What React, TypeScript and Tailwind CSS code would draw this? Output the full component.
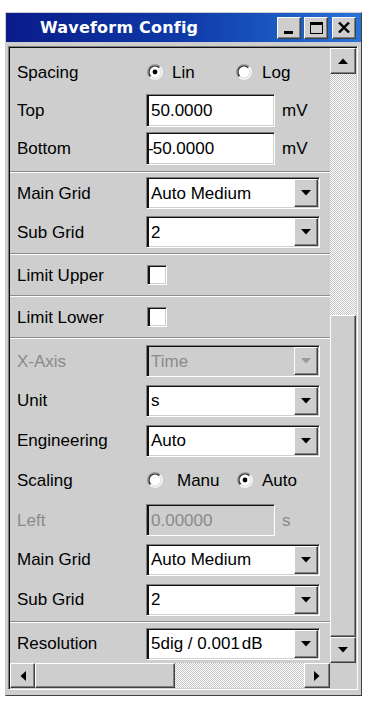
import React from "react";

const FACE = "bg-[#cecece]";
const raised =
  "border border-t-white border-l-white border-r-[#404040] border-b-[#404040] shadow-[inset_-1px_-1px_0_#808080] bg-[#cecece]";
const sunken =
  "border border-t-[#808080] border-l-[#808080] border-r-white border-b-white shadow-[inset_2px_1px_0_#111,inset_-1px_-1px_0_#d4d0c8]";
const dither =
  "bg-[image:repeating-conic-gradient(#ffffff_0%_25%,#c4c4c4_0%_50%)] bg-[length:2px_2px]";

function TriDown({ color = "#000" }: { color?: string }) {
  return (
    <svg width="10" height="6" viewBox="0 0 10 6">
      <polygon points="0,0 10,0 5,5.5" fill={color} />
    </svg>
  );
}
function TriUp() {
  return (
    <svg width="10" height="6" viewBox="0 0 10 6">
      <polygon points="0,6 10,6 5,0.5" fill="#000" />
    </svg>
  );
}
function TriLeft() {
  return (
    <svg width="6" height="10" viewBox="0 0 6 10">
      <polygon points="6,0 6,10 0.5,5" fill="#000" />
    </svg>
  );
}
function TriRight() {
  return (
    <svg width="6" height="10" viewBox="0 0 6 10">
      <polygon points="0,0 0,10 5.5,5" fill="#000" />
    </svg>
  );
}

function Radio({ checked }: { checked?: boolean }) {
  const c = 8;
  const a = (r: number) => {
    const d = r * Math.SQRT1_2;
    return { bl: `${c - d} ${c + d}`, tr: `${c + d} ${c - d}` };
  };
  const o = a(7.2);
  const i = a(6);
  return (
    <svg width="16" height="16" viewBox="0 0 16 16" className="shrink-0">
      <circle cx="8" cy="8" r="6.5" fill="#fff" />
      <path d={`M${o.bl} A7.2 7.2 0 0 1 ${o.tr}`} stroke="#8a8a8a" strokeWidth="1.3" fill="none" />
      <path d={`M${o.tr} A7.2 7.2 0 0 1 ${o.bl}`} stroke="#fff" strokeWidth="1.3" fill="none" />
      <path d={`M${i.bl} A6 6 0 0 1 ${i.tr}`} stroke="#303030" strokeWidth="1.2" fill="none" />
      <path d={`M${i.tr} A6 6 0 0 1 ${i.bl}`} stroke="#e0e0e0" strokeWidth="1.2" fill="none" />
      {checked && <circle cx="8" cy="8" r="2.4" fill="#000" />}
    </svg>
  );
}

function Label({ children, disabled }: { children: React.ReactNode; disabled?: boolean }) {
  return (
    <div className={`w-[129px] shrink-0 ${disabled ? "text-[#8a8a8a]" : "text-black"}`}>{children}</div>
  );
}

function Select({ value, disabled }: { value: React.ReactNode; disabled?: boolean }) {
  return (
    <div className={`w-[174px] h-full flex ${sunken} ${disabled ? FACE : "bg-white"}`}>
      <div className={`flex-1 flex items-center pl-[4px] whitespace-nowrap ${disabled ? "text-[#8a8a8a]" : "text-black"}`}>
        {value}
      </div>
      <div className={`w-[24px] my-[1px] mr-[1px] ${raised} flex items-center justify-center`}>
        <TriDown color={disabled ? "#9a9a9a" : "#000"} />
      </div>
    </div>
  );
}

function Input({
  value,
  unit,
  disabled,
  minus,
}: {
  value: string;
  unit: string;
  disabled?: boolean;
  minus?: boolean;
}) {
  return (
    <>
      <div
        className={`w-[129px] h-full flex items-center pl-[4px] ${sunken} ${
          disabled ? `${FACE} text-[#8a8a8a]` : "bg-white text-black"
        }`}
      >
        {minus && <span className="-ml-[3px] mr-[-1px]">-</span>}
        {value}
      </div>
      <div className={`ml-[7px] ${disabled ? "text-[#8a8a8a]" : "text-black"}`}>{unit}</div>
    </>
  );
}

function Sep() {
  return <div className="h-[2px] border-t border-t-[#8c8c8c] border-b border-b-white" />;
}

function Row({ children, h = "h-[32px]" }: { children: React.ReactNode; h?: string }) {
  return <div className={`flex items-center ${h}`}>{children}</div>;
}

export default function App() {
  return (
    <div
      className="w-[367px] h-[701px] bg-white pt-[12px] pl-[5px] text-[17px] leading-none"
      style={{ fontFamily: '"Liberation Sans", Arial, sans-serif' }}
    >
      <div className="w-[357px] h-[684px] bg-[#cecece] border border-t-[#cecece] border-l-[#cecece] border-r-[#404040] border-b-[#404040] flex flex-col">
        {/* Title bar */}
        <div className="h-[29px] shrink-0 flex items-center bg-linear-to-r from-[#0a1b8a] via-[#0f3aa8] to-[#2a72d8]">
          <div
            className="pl-[34px] text-white font-bold text-[16px] tracking-[0.2px]"
            style={{ fontFamily: '"DejaVu Sans", Verdana, sans-serif' }}
          >
            Waveform Config
          </div>
          <div className="ml-auto flex items-center pr-[5px]">
            <div className={`w-[24px] h-[22px] ${raised} flex items-end justify-center pb-[4px]`}>
              <div className="w-[9px] h-[3px] bg-black -ml-[2px]" />
            </div>
            <div className={`ml-[3px] w-[24px] h-[22px] ${raised} flex items-center justify-center`}>
              <div className="w-[13px] h-[12px] border border-black border-t-[3px]" />
            </div>
            <div className={`ml-[4px] w-[24px] h-[22px] ${raised} flex items-center justify-center`}>
              <svg width="12" height="11" viewBox="0 0 12 11">
                <path d="M1 0.5 L11 10.5 M11 0.5 L1 10.5" stroke="#000" strokeWidth="2.4" />
              </svg>
            </div>
          </div>
        </div>

        {/* frame gap */}
        <div className="h-[4px] shrink-0" />

        {/* Client area */}
        <div className="ml-[2px] w-[350px] h-[644px] border border-t-[#808080] border-l-[#808080] border-r-white border-b-white shadow-[inset_1px_1px_0_#111] p-[1px] flex flex-col">
          <div className="flex h-[615px]">
            {/* Panel */}
            <div className="w-[320px] flex flex-col">
              {/* Section 1 */}
              <div className="pt-[7px] pb-[6px] pl-[7px] flex flex-col gap-[5px]">
                <Row h="h-[34px]">
                  <Label>Spacing</Label>
                  <div className="w-[90px] flex items-center pl-[1px]">
                    <Radio checked />
                    <span className="ml-[9px]">Lin</span>
                  </div>
                  <div className="flex items-center">
                    <Radio />
                    <span className="ml-[10px]">Log</span>
                  </div>
                </Row>
                <Row h="h-[33px]">
                  <Label>Top</Label>
                  <Input value="50.0000" unit="mV" />
                </Row>
                <Row h="h-[33px]">
                  <Label>Bottom</Label>
                  <Input value="50.0000" unit="mV" minus />
                </Row>
              </div>
              <Sep />
              {/* Section 2 */}
              <div className="pt-[4px] pb-[5px] pl-[7px] flex flex-col gap-[7px]">
                <Row>
                  <Label>Main Grid</Label>
                  <Select value="Auto Medium" />
                </Row>
                <Row>
                  <Label>Sub Grid</Label>
                  <Select value="2" />
                </Row>
              </div>
              <Sep />
              <div className="h-[40px] pl-[7px] flex items-center">
                <Label>Limit Upper</Label>
                <div className={`ml-[1px] w-[20px] h-[20px] bg-white ${sunken}`} />
              </div>
              <Sep />
              <div className="h-[40px] pl-[7px] flex items-center">
                <Label>Limit Lower</Label>
                <div className={`ml-[1px] w-[20px] h-[20px] bg-white ${sunken}`} />
              </div>
              <Sep />
              {/* Section 5 */}
              <div className="pt-[6px] pb-[5px] pl-[7px] flex flex-col gap-[7.8px]">
                <Row>
                  <Label disabled>X-Axis</Label>
                  <Select value="Time" disabled />
                </Row>
                <Row>
                  <Label>Unit</Label>
                  <Select value="s" />
                </Row>
                <Row>
                  <Label>Engineering</Label>
                  <Select value="Auto" />
                </Row>
                <Row>
                  <Label>Scaling</Label>
                  <div className="w-[91px] flex items-center pl-[1px]">
                    <Radio />
                    <span className="ml-[14px]">Manu</span>
                  </div>
                  <div className="flex items-center">
                    <Radio checked />
                    <span className="ml-[9px]">Auto</span>
                  </div>
                </Row>
                <Row>
                  <Label disabled>Left</Label>
                  <Input value="0.00000" unit="s" disabled />
                </Row>
                <Row>
                  <Label>Main Grid</Label>
                  <Select value="Auto Medium" />
                </Row>
                <Row>
                  <Label>Sub Grid</Label>
                  <Select value="2" />
                </Row>
              </div>
              <Sep />
              <div className="pt-[5px] pl-[7px]">
                <Row>
                  <Label>Resolution</Label>
                  <Select
                    value={
                      <>
                        5dig / 0.001<span className="ml-[2px]">dB</span>
                      </>
                    }
                  />
                </Row>
              </div>
            </div>

            {/* Vertical scrollbar */}
            <div className="w-[26px] flex flex-col">
              <div className={`h-[26px] ${raised} flex items-center justify-center`}>
                <TriUp />
              </div>
              <div className={`h-[241px] ${dither}`} />
              <div className={`flex-1 ${raised}`} />
              <div className={`h-[26px] ${raised} flex items-center justify-center`}>
                <TriDown />
              </div>
            </div>
          </div>

          {/* Horizontal scrollbar */}
          <div className="flex h-[25px]">
            <div className={`w-[25px] ${raised} flex items-center justify-center`}>
              <TriLeft />
            </div>
            <div className={`w-[140px] ${raised}`} />
            <div className={`flex-1 ${dither}`} />
            <div className={`w-[26px] ${raised} flex items-center justify-center`}>
              <TriRight />
            </div>
            <div className="w-[26px] bg-[#cecece]" />
          </div>
        </div>
      </div>
    </div>
  );
}
